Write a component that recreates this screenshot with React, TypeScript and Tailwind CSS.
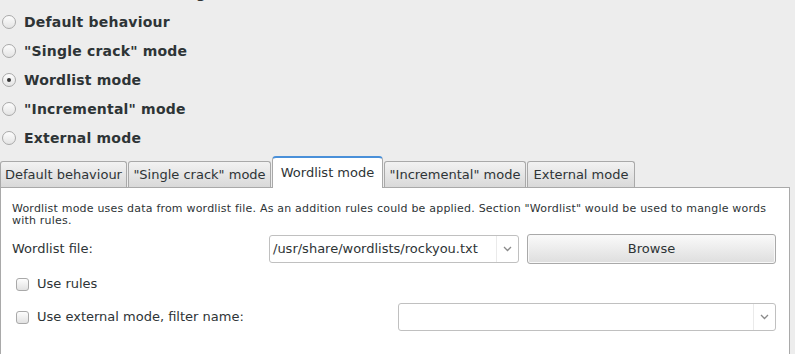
import React from "react";

const radios = [
  { label: "Default behaviour", on: false },
  { label: "\"Single crack\" mode", on: false },
  { label: "Wordlist mode", on: true },
  { label: "\"Incremental\" mode", on: false },
  { label: "External mode", on: false },
];

const tabs = [
  { label: "Default behaviour", w: "w-[127px]" },
  { label: "\"Single crack\" mode", w: "w-[143px]" },
  { label: "Wordlist mode", w: "w-[111px]", active: true },
  { label: "\"Incremental\" mode", w: "w-[142px]" },
  { label: "External mode", w: "w-[108px]" },
];

function Radio({ on }: { on: boolean }) {
  return (
    <span className="w-[14px] h-[14px] rounded-full border border-[#a9a9a9] bg-gradient-to-b from-[#fdfdfd] to-[#e4e4e4] flex items-center justify-center shrink-0">
      {on && <span className="w-[4px] h-[4px] rounded-full bg-[#333]" />}
    </span>
  );
}

function Check() {
  return <span className="w-[13px] h-[13px] rounded-[3px] border border-[#a9a9a9] bg-gradient-to-b from-[#fdfdfd] to-[#e2e2e2] shrink-0" />;
}

function Chevron() {
  return (
    <svg width="9" height="6" viewBox="0 0 9 6">
      <path d="M1 1 L4.5 4.5 L8 1" fill="none" stroke="#8a8a8a" strokeWidth="1.3" />
    </svg>
  );
}

export default function App() {
  return (
    <div className="w-[795px] h-[354px] bg-[#ededed] overflow-hidden relative font-['DejaVu_Sans',sans-serif] text-[#2e3436]">
      <span className="absolute left-[196px] -top-[14px] text-[14px] font-bold leading-none">g</span>
      <div className="flex flex-col pt-[7px] pl-[2px]">
        {radios.map((r) => (
          <div key={r.label} className="h-[29px] flex items-center gap-[8px]">
            <Radio on={r.on} />
            <span className="text-[14px] font-bold leading-none tracking-[0.2px]">{r.label}</span>
          </div>
        ))}
      </div>
      <div className="flex items-end h-[32px] mt-[3px]">
        {tabs.map((t) =>
          t.active ? (
            <div key={t.label} className={`${t.w} h-[32px] bg-white border border-[#a9a9a9] border-b-0 border-t-[2px] border-t-[#4a90d9] rounded-t-[4px] flex items-center justify-center text-[13px] relative z-10 -mb-px mr-px`}>
              {t.label}
            </div>
          ) : (
            <div key={t.label} className={`${t.w} h-[26px] bg-gradient-to-b from-[#f2f2f2] to-[#d9d9d9] border border-[#a9a9a9] border-b-0 rounded-t-[3px] flex items-center justify-center text-[13px] text-[#2e3436] mr-px`}>
              {t.label}
            </div>
          )
        )}
      </div>
      <div className="w-[790px] h-[170px] bg-white border border-[#a9a9a9] border-b-0">
        <p className="pl-[11px] pr-[10px] pt-[15px] text-[11px] leading-[12px] tracking-[0.2px]">
          Wordlist mode uses data from wordlist file. As an addition rules could be applied. Section "Wordlist" would be used to mangle words with rules.
        </p>
        <div className="flex items-center mt-[7px] h-[30px]">
          <span className="pl-[11px] w-[268px] text-[13px]">Wordlist file:</span>
          <div className="w-[250px] h-[28px] border border-[#c0c0c0] rounded-[3px] flex items-center bg-white">
            <span className="flex-1 pl-[3px] text-[13px]">/usr/share/wordlists/rockyou.txt</span>
            <span className="w-[22px] h-full border-l border-[#eaeaea] flex items-center justify-center"><Chevron /></span>
          </div>
          <button className="ml-[8px] w-[249px] h-[30px] border border-[#a9a9a9] rounded-[3px] bg-gradient-to-b from-[#fafafa] to-[#dedede] shadow-[inset_0_0_0_1px_#f8f8f8] text-[13px] text-[#2e3436]">
            Browse
          </button>
        </div>
        <div className="flex items-center gap-[8px] pl-[15px] h-[28px] mt-[6px]">
          <Check />
          <span className="text-[13px]">Use rules</span>
        </div>
        <div className="flex items-center h-[28px] mt-[5px]">
          <div className="flex items-center gap-[8px] pl-[15px] w-[397px]">
            <Check />
            <span className="text-[13px]">Use external mode, filter name:</span>
          </div>
          <div className="w-[378px] h-[28px] border border-[#c0c0c0] rounded-[3px] flex items-center bg-white">
            <span className="flex-1" />
            <span className="w-[22px] h-full border-l border-[#eaeaea] flex items-center justify-center"><Chevron /></span>
          </div>
        </div>
      </div>
    </div>
  );
}
